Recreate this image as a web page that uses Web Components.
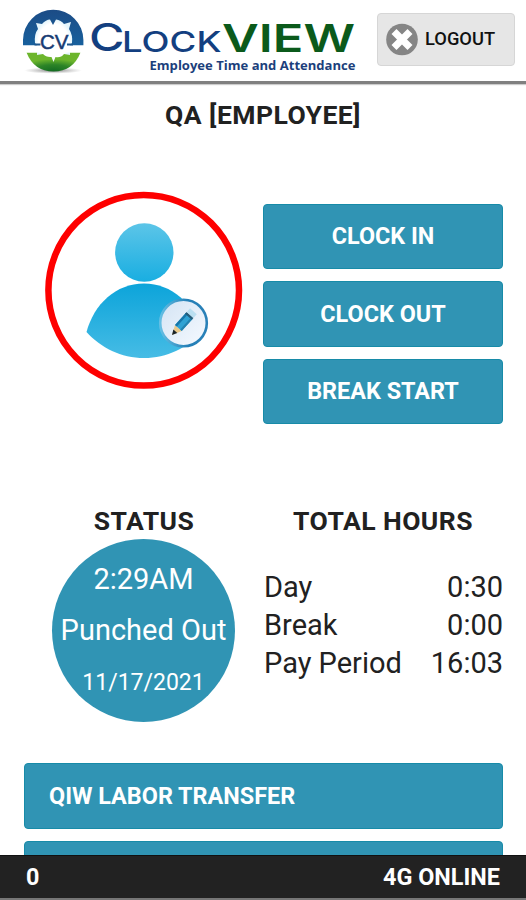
<!DOCTYPE html>
<html lang="en">
<head>
<meta charset="utf-8">
<title>ClockVIEW</title>
<style>
html,body{margin:0;height:100%;overflow:hidden;background:#fff}
body{font-family:Roboto,"Liberation Sans",sans-serif;color:#212121}
</style>
</head>
<body>
<clock-app></clock-app>
<script>
const define = (name, html) => customElements.define(name, class extends HTMLElement {
  constructor() {
    super();
    const t = document.createElement('template');
    t.innerHTML = html;
    this.attachShadow({mode: 'open'}).append(t.content.cloneNode(true));
  }
});

define('cv-logo', `
<style>:host{display:block;width:350px;height:76px}svg{display:block}</style>
<svg width="370" height="76" viewBox="0 0 370 76">
  <defs>
    <radialGradient id="sh"><stop offset="0" stop-color="#555" stop-opacity=".75"/><stop offset="1" stop-color="#888" stop-opacity="0"/></radialGradient>
    <linearGradient id="bl" x2="0" y2="1"><stop offset="0" stop-color="#1c4c86"/><stop offset="1" stop-color="#17609d"/></linearGradient>
    <radialGradient id="gr" cx=".5" cy="1" r=".65"><stop offset="0" stop-color="#126a22"/><stop offset=".55" stop-color="#2c8427"/><stop offset="1" stop-color="#6cb52c"/></radialGradient>
    <radialGradient id="w" cx=".5" cy=".5" r=".5"><stop offset=".8" stop-color="#fff"/><stop offset="1" stop-color="#e4f5fc"/></radialGradient>
  </defs>
  <ellipse cx="53" cy="70.5" rx="29" ry="3.2" fill="url(#sh)"/>
  <path d="M23 45.5V40A30.2 30.2 0 0 1 83.400 40V45.500Z" fill="url(#bl)"/>
  <path d="M26.500 52.500H80.500Q73 71.500 53.500 71.500T26.500 52.500Z" fill="url(#gr)"/>
  <path d="M35 43Q34 34 38 29L36 23L42 24Q46 19.500 50 19.500L53 25L56 19.500Q61 20 64 24L71 22L69 29Q73 35 72 43L70 45.500V52.500L70 55L64 54Q61 58 55.500 57L53.500 62L51.500 57Q46 57.500 43 54L37 55L37 52.500V45.500Z" fill="url(#w)"/>
  <path d="M22 45.600H84V52.400H22Z" fill="#fff"/>
  <path d="M34.500 44.500H40.500M67 44.500H73" stroke="#1d568e" stroke-width="2.200"/>
  <text x="40" y="49" font-family="Liberation Sans,sans-serif" font-size="21" textLength="28.500" lengthAdjust="spacingAndGlyphs" fill="#173b73" stroke="#173b73" stroke-width=".5">CV</text>
  <g font-family="Inter,sans-serif" fill="#133f80">
    <text x="89" y="51" font-size="38" font-weight="500" textLength="35.500" lengthAdjust="spacingAndGlyphs">C</text>
    <text x="122" y="51.500" font-size="28" font-weight="500" textLength="99.500" lengthAdjust="spacingAndGlyphs">LOCK</text>
    <text x="222" y="51.500" font-size="38.500" font-weight="600" textLength="133" lengthAdjust="spacingAndGlyphs" fill="#0b5a1b">VIEW</text>
  </g>
  <text x="149.500" y="70" font-family="Open Sans,sans-serif" font-weight="700" font-size="12.300" textLength="206" lengthAdjust="spacingAndGlyphs" fill="#1c3f7c">Employee Time and Attendance</text>
</svg>`);

define('logout-button', `
<style>
:host{display:flex;box-sizing:border-box;width:138px;height:53px;align-items:center;padding-left:8px;gap:7px;background:#e6e6e6;border:1px solid #d6d6d6;border-radius:4px;font-size:18.300px;font-weight:500;color:#111}
span{padding-bottom:2px}
svg{display:block}
</style>
<svg width="32" height="34" viewBox="0 0 32 34"><circle cx="16" cy="16.500" r="15.800" fill="#858585"/><path d="M8 8.500L24 24.500M24 8.500L8 24.500" stroke="#fff" stroke-width="7"/></svg>
<span><slot></slot></span>`);

define('app-header', `
<style>:host{display:flex;box-sizing:border-box;height:84px;justify-content:space-between;padding-right:11px;border-bottom:3px solid #808080;box-shadow:0 1px 1px #ccc}
logout-button{margin-top:13px}</style>
<cv-logo></cv-logo><logout-button>LOGOUT</logout-button>`);

define('user-avatar', `
<style>:host{display:block;width:198px;height:198px}svg{display:block}</style>
<svg width="198" height="198" viewBox="45 191 198 198">
  <defs>
    <linearGradient id="h" x2="0" y2="1"><stop offset="0" stop-color="#5cc5e8"/><stop offset="1" stop-color="#19aee1"/></linearGradient>
    <linearGradient id="b" x2="0" y2="1"><stop offset="0" stop-color="#0ca4da"/><stop offset="1" stop-color="#46bce5"/></linearGradient>
    <linearGradient id="e" x2="1" y2="1"><stop offset="0" stop-color="#d3e3f4"/><stop offset="1" stop-color="#f6faff"/></linearGradient>
    <linearGradient id="r" x2="1" y2="0"><stop offset="0" stop-color="#65bfe4"/><stop offset=".6" stop-color="#247fb7"/><stop offset="1" stop-color="#2a81b8"/></linearGradient>
  </defs>
  <circle cx="143.700" cy="290.300" r="95.300" fill="#fff" stroke="#fe0000" stroke-width="6.500"/>
  <circle cx="144.300" cy="252.500" r="29.200" fill="url(#h)"/>
  <path d="M86.500 332C94 304 116 283.500 144 283.500S194 304 201.500 332C187 348 167 358 144 358S101 348 86.500 332Z" fill="url(#b)"/>
  <circle cx="183.500" cy="323" r="23.300" fill="url(#e)" stroke="url(#r)" stroke-width="2.600"/>
  <g transform="translate(172 335) rotate(-48)">
    <path d="M0 0L9.500-4.500V4.500Z" fill="#e9c98b"/><path d="M0 0L5-2.600V2.600Z" fill="#182329"/>
    <path d="M9.500-4.500H26V4.500H9.500Z" fill="#2fa2d4"/><path d="M9.500-4.500H26V-2H9.500Z" fill="#1676a9"/><path d="M9.500 2.500H26V4.500H9.500Z" fill="#2382b0"/>
    <path d="M24.500-4.500H27V4.500H24.500Z" fill="#255d7b"/><path d="M27-4.500H32V4.500H27Z" fill="#badff1"/>
  </g>
</svg>`);

define('action-button', `
<style>:host{display:flex;box-sizing:border-box;height:65.500px;align-items:center;justify-content:var(--align,center);padding:0 24px;background:#3094b4;border:1px solid #178ba8;border-radius:4px;color:#fff;font-size:23.400px;font-weight:700;white-space:nowrap}</style>
<slot></slot>`);

define('section-title', `
<style>:host{display:block;text-align:center;font-size:26.500px;letter-spacing:.45px;line-height:32px;font-weight:700;white-space:nowrap}</style><slot></slot>`);

define('status-badge', `
<style>:host{display:flex;flex-direction:column;align-items:center;box-sizing:border-box;width:183px;height:183px;border-radius:50%;background:#3094b4;color:#fff;white-space:nowrap;padding-top:22px;font-size:29px;line-height:36px}
.s{margin-top:15px}.d{font-size:23px;margin-top:17px}</style>
<div><slot name="time"></slot></div><div class="s"><slot></slot></div><div class="d"><slot name="date"></slot></div>`);

define('hours-row', `
<style>:host{display:flex;justify-content:space-between;font-size:29px;line-height:38px;white-space:nowrap}</style>
<slot></slot><slot name="value"></slot>`);

define('status-bar', `
<style>:host{display:flex;box-sizing:border-box;height:45px;align-items:center;justify-content:space-between;padding:0 26px;background:#222;border-top:1px solid #111;border-bottom:2px solid #777;color:#fff;font-size:23.400px;font-weight:700}</style>
<slot></slot><slot name="network"></slot>`);

define('clock-app', `
<style>
:host{display:flex;flex-direction:column;width:526px;height:900px;overflow:hidden;background:#fff}
main{flex:1;min-height:0;overflow:hidden}
.title{margin-top:15px}
.grid{display:grid;grid-template-columns:198px 240px;column-gap:20px;padding-left:45px;align-items:start}
.top{margin-top:60px}
.actions{display:flex;flex-direction:column;gap:12px;margin-top:12.500px}
.low{margin-top:81px;height:217px}
.low status-badge{margin:2px 0 0 7px}
.hours{margin-top:31px;padding-left:1px}
.list{display:flex;flex-direction:column;gap:12px;padding:0 23px 0 24px;margin-top:41px;--align:flex-start}
</style>
<app-header></app-header>
<main>
  <section-title class="title">QA [EMPLOYEE]</section-title>
  <div class="grid top"><user-avatar></user-avatar>
    <div class="actions"><action-button>CLOCK IN</action-button><action-button>CLOCK OUT</action-button><action-button>BREAK START</action-button></div></div>
  <div class="grid low">
    <div><section-title>STATUS</section-title>
      <status-badge><span slot="time">2:29AM</span>Punched Out<span slot="date">11/17/2021</span></status-badge></div>
    <div><section-title>TOTAL HOURS</section-title>
      <div class="hours"><hours-row>Day<span slot="value">0:30</span></hours-row><hours-row>Break<span slot="value">0:00</span></hours-row><hours-row>Pay Period<span slot="value">16:03</span></hours-row></div></div>
  </div>
  <div class="list"><action-button>QIW LABOR TRANSFER</action-button><action-button></action-button></div>
</main>
<status-bar>0<span slot="network">4G ONLINE</span></status-bar>`);
</script>
</body>
</html>
